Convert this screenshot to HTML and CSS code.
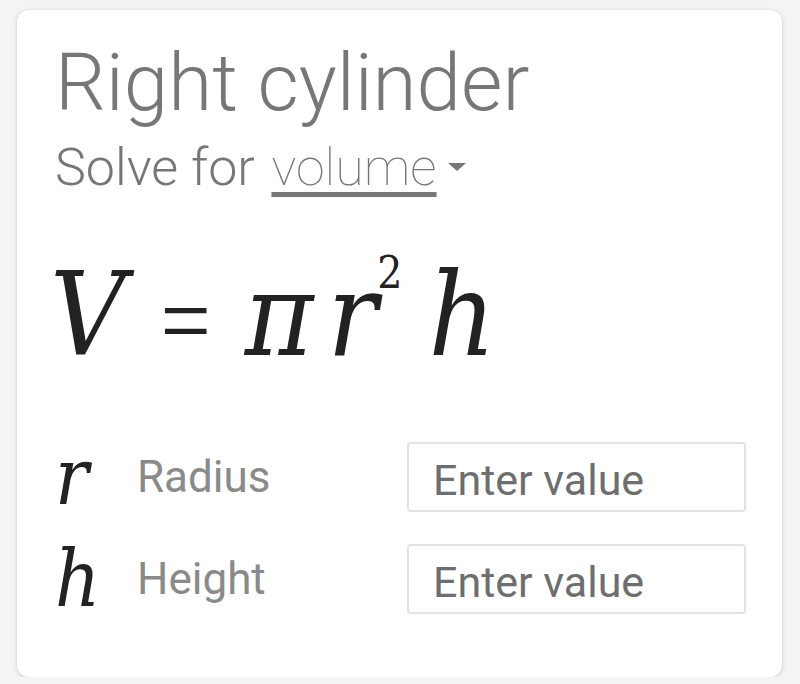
FILE: index.html
```html
<!DOCTYPE html>
<html lang="en">
<head>
    <meta charset="UTF-8">
    <title>Right cylinder</title>
    <link rel="stylesheet" href="styles.css">
</head>
<body>
    <div class="card">
        <h1 class="title">Right cylinder</h1>
        <div class="solve">
            Solve for <span class="solve-pick">volume</span><span class="caret"></span>
        </div>
        <div class="formula">
            <span class="var v">V</span><span class="eq">=</span><span class="var pi">π</span><span class="var r">r</span><sup class="sq">2</sup><span class="var h">h</span>
        </div>
        <div class="row">
            <span class="row-var">r</span>
            <span class="row-label">Radius</span>
            <input class="row-input" type="text" placeholder="Enter value">
        </div>
        <div class="row">
            <span class="row-var">h</span>
            <span class="row-label">Height</span>
            <input class="row-input" type="text" placeholder="Enter value">
        </div>
    </div>
</body>
</html>
```
FILE: styles.css
```css
body {
    margin: 0;
    background: #f4f4f4;
    font-family: Roboto, "Liberation Sans", sans-serif;
}
.card {
    box-sizing: border-box;
    width: 765px;
    height: 667px;
    margin: 10px 0 0 17px;
    padding: 0 36px 0 38px;
    background: #fff;
    border-radius: 12px;
    box-shadow: 0 1px 4px rgba(0, 0, 0, 0.18);
    overflow: hidden;
}
.title {
    margin: 0;
    padding-top: 26px;
    font-size: 80px;
    font-weight: 300;
    line-height: 94px;
    color: #777;
}
.solve {
    margin-top: 8px;
    font-size: 52px;
    font-weight: 300;
    line-height: 60px;
    color: #777;
}
.solve-pick {
    margin-left: 4px;
    font-weight: 100;
    text-decoration: underline;
    text-decoration-thickness: 5px;
    text-underline-offset: 7px;
}
.caret {
    display: inline-block;
    margin-left: 11px;
    vertical-align: 14px;
    border-left: 9px solid transparent;
    border-right: 9px solid transparent;
    border-top: 8px solid #777;
}
.formula {
    margin: 52px 0 0 -5px;
    height: 130px;
    font-family: "DejaVu Serif Condensed", "DejaVu Serif", "Liberation Serif", serif;
    font-size: 116px;
    line-height: 130px;
    color: #222;
    white-space: nowrap;
}
.var {
    font-style: italic;
}
.eq {
    margin: 0 31px 0 32px;
    font-family: Roboto, sans-serif;
    font-weight: 300;
    font-size: 102px;
}
.r {
    margin-left: 14px;
}
.sq {
    font-size: 44px;
    font-style: normal;
    vertical-align: 67px;
    line-height: 0;
    margin-right: 26px;
}
.row {
    display: flex;
    align-items: center;
    height: 70px;
    margin-top: 62px;
}
.row + .row {
    margin-top: 32px;
}
.row-var {
    width: 82px;
    font-family: "DejaVu Serif Condensed", "DejaVu Serif", "Liberation Serif", serif;
    font-style: italic;
    font-size: 78px;
    color: #222;
}
.row-label {
    width: 270px;
    font-size: 44px;
    color: #8a8a8a;
}
.row-input {
    box-sizing: border-box;
    width: 339px;
    height: 70px;
    padding: 5px 24px 0;
    border: 2px solid #e2e2e2;
    border-radius: 4px;
    font-family: Roboto, sans-serif;
    font-size: 43px;
    color: #666;
    outline: none;
}
.row-input::placeholder {
    color: #6e6e6e;
}
```
